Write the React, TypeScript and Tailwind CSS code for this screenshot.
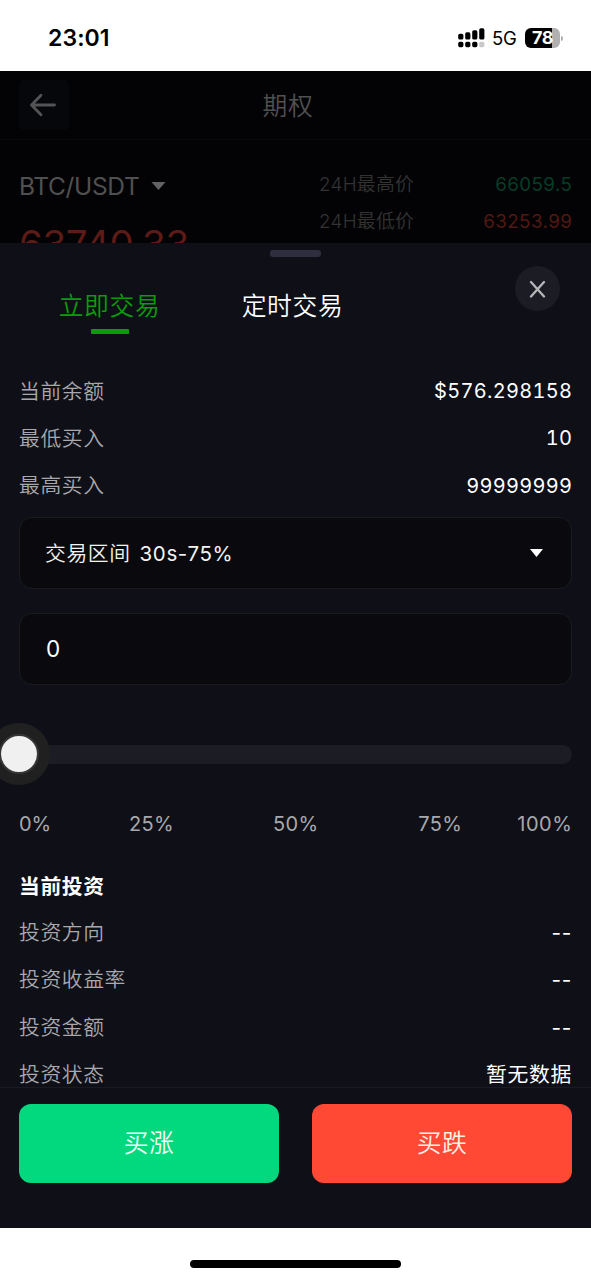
import React from "react";

function Row({ label, value }: { label: string; value: string }) {
  const numeric = /\d/.test(value);
  return (
    <div className="flex h-[47.3px] items-center justify-between">
      <span className="text-[20.8px] font-[350] tracking-[0.6px] text-[#a8a8ad]">{label}</span>
      <span
        className={
          numeric
            ? "-mr-[0.3px] text-[20px] tracking-[0.3px] text-white tabular-nums"
            : "text-[20.8px] tracking-[0.7px] text-white"
        }
      >
        {value}
      </span>
    </div>
  );
}

function StatusBar() {
  return (
    <div className="flex h-[71px] shrink-0 items-center justify-between bg-white pr-[28px] pb-1 pl-12 text-black">
      <span className="mt-[9px] text-[23px] leading-none font-semibold tracking-[0.1px]">23:01</span>
      <div className="mt-[9px] flex items-center">
        <svg width="28" height="20" viewBox="0 0 28 20">
          <g fill="#000">
            <rect x="0.2" y="5.8" width="5.2" height="5.8" rx="1.6" />
            <rect x="7.2" y="4.3" width="5.2" height="7.3" rx="1.6" />
            <rect x="14.2" y="2.3" width="5.2" height="9.3" rx="1.6" />
            <rect x="21.2" y="0.3" width="5.2" height="11.3" rx="1.6" />
            <rect x="0.2" y="13.8" width="5.2" height="5.4" rx="1.6" />
            <rect x="7.2" y="13.8" width="5.2" height="5.4" rx="1.6" />
            <rect x="14.2" y="13.8" width="5.2" height="5.4" rx="1.6" />
          </g>
          <rect x="21.2" y="13.8" width="5.2" height="5.4" rx="1.6" fill="#c9c9c9" />
        </svg>
        <span className="ml-[6px] w-[27px] text-[18.5px] leading-none tracking-[-0.2px]">5G</span>
        <div className="ml-[6px] flex h-[20px] w-[35px] items-center justify-center rounded-[6px] bg-[linear-gradient(to_right,#000_78%,#b0b0b0_78%)] text-[18px] leading-none font-bold tracking-[-0.5px] text-white">
          78
        </div>
        <div className="ml-[1px] h-[5px] w-[2px] rounded-r-full bg-[#b0b0b0]" />
      </div>
    </div>
  );
}

function Backdrop() {
  return (
    <div className="h-[172px] shrink-0 overflow-hidden bg-[#030305]">
      <div className="grid h-[69px] grid-cols-[50px_1fr_50px] items-center border-b border-[#09090c] px-[19px]">
        <div className="flex size-[50px] items-center justify-center rounded-[5px] bg-[#06070a]">
          <svg className="mr-[2px]" width="28" height="24" viewBox="0 0 28 24" fill="none" stroke="#545456" strokeWidth="2.8" strokeLinecap="round" strokeLinejoin="round">
            <path d="M25.5 12H2.5M12 2.3 2.5 12l9.5 9.7" />
          </svg>
        </div>
        <h1 className="pt-[3px] pr-[15px] text-center text-[24.8px] font-[350] tracking-[0.8px] text-[#505050]">期权</h1>
      </div>
      <div className="flex justify-between px-[19px]">
        <div className="pt-[31px]">
          <div className="flex items-center gap-[12px] text-[24.5px] leading-[30px] tracking-[-0.35px] text-[#505050]">
            BTC/USDT
            <svg width="15" height="8" viewBox="0 0 14 8">
              <path d="M0 0h14L7 8z" fill="#626262" />
            </svg>
          </div>
          <div className="mt-[18px] text-[38.5px] leading-[50px] tracking-[-0.4px] text-[#5c1b16]">63740.33</div>
        </div>
        <div className="w-[253px] pt-[27px] text-[18.8px] tracking-[0.3px]">
          <div className="flex h-[37px] items-center justify-between">
            <span className="font-[350] text-[#333333]">24H最高价</span>
            <span className="-mr-[0.3px] tracking-[0.4px] text-[#063d28]">66059.5</span>
          </div>
          <div className="flex h-[37px] items-center justify-between">
            <span className="font-[350] text-[#333333]">24H最低价</span>
            <span className="-mr-[0.3px] tracking-[0.4px] text-[#521813]">63253.99</span>
          </div>
        </div>
      </div>
    </div>
  );
}

function Tabs() {
  return (
    <div className="flex pl-[18px] text-[24.8px] leading-[36px] font-[350] tracking-[0.6px]">
      <button className="flex w-[183px] flex-col items-center text-[#0b9b0b]">
        立即交易
        <span className="mt-[5px] h-[5px] w-[38px] rounded-[1px] bg-[#0b9b0b]" />
      </button>
      <button className="flex w-[183px] flex-col items-center text-white">定时交易</button>
    </div>
  );
}

function AmountSlider() {
  return (
    <div className="relative mt-[60px] h-[19px] rounded-full bg-[#1c1c24]">
      <div className="absolute top-1/2 left-0 flex size-[62px] -translate-1/2 items-center justify-center rounded-full bg-[#202020]">
        <div className="size-[40px] rounded-full border-2 border-[#363636] bg-[#f0f0f0]" />
      </div>
    </div>
  );
}

export default function App() {
  return (
    <div className="flex h-[1280px] w-full flex-col overflow-hidden bg-white font-['Inter','Noto_Sans_CJK_SC',sans-serif]">
      <StatusBar />
      <Backdrop />
      <main className="flex h-[985px] shrink-0 flex-col bg-[#0f0f18]">
        <section className="relative h-[844px] overflow-hidden px-[19px]">
          <div className="mx-auto mt-[7px] h-[7px] w-[51px] rounded-[3px] bg-[#2f2e3e]" />
          <button className="absolute top-[23px] right-[31px] flex size-[45px] items-center justify-center rounded-full bg-[#1c1c24]">
            <svg className="-ml-px" width="17" height="18" viewBox="0 0 17 18" stroke="#b6b6b9" strokeWidth="2.3" strokeLinecap="round">
              <path d="m2 2 13 14.5M15 2 2 16.5" />
            </svg>
          </button>
          <div className="-mx-[19px] mt-[31px]">
            <Tabs />
          </div>
          <div className="mt-[33.5px]">
            <Row label="当前余额" value="$576.298158" />
            <Row label="最低买入" value="10" />
            <Row label="最高买入" value="99999999" />
          </div>
          <div className="mt-[7.5px] flex h-[72px] items-center justify-between rounded-[13px] border-[1.5px] border-[#1a1a20] bg-[#0a0a0e] pr-[28px] pl-[25px] text-[20.8px] tracking-[0.6px] text-[#f3f3ef]">
            <span className="flex items-baseline gap-[9px] pt-[2px]">
              <span className="font-[350]">交易区间</span>
              <span className="text-[20.5px]">30s-75%</span>
            </span>
            <svg width="13" height="8" viewBox="0 0 13 8">
              <path d="M0 0h13L6.5 8z" fill="#fff" />
            </svg>
          </div>
          <div className="mt-[24px] flex h-[72px] items-center rounded-[13px] border-[1.5px] border-[#1a1a20] bg-[#0a0a0e] px-[26px] text-[22.5px] text-white">0</div>
          <AmountSlider />
          <div className="mt-[45px] flex h-[30px] items-center justify-between text-[20px] text-[#a8a8ac]">
            <span className="w-[60px]">0%</span>
            <span className="w-[144px] text-center tracking-[0.3px]">25%</span>
            <span className="w-[144px] text-center tracking-[0.3px]">50%</span>
            <span className="w-[144px] text-center tracking-[0.3px]">75%</span>
            <span className="-mr-[0.6px] flex w-[60px] justify-end tracking-[0.6px]">100%</span>
          </div>
          <h2 className="mt-[33px] h-[30px] text-[20.8px] leading-[30px] font-bold tracking-[0.6px] text-white">当前投资</h2>
          <div className="mt-[7px]">
            <Row label="投资方向" value="--" />
            <Row label="投资收益率" value="--" />
            <Row label="投资金额" value="--" />
            <Row label="投资状态" value="暂无数据" />
          </div>
        </section>
        <div className="grid flex-1 grid-cols-2 items-start gap-[33px] border-t border-[#1a1a22] px-[19px] pt-[16px]">
          <button className="h-[79px] rounded-[12px] bg-[#02d97f] text-[24.8px] font-[350] tracking-[0.5px] text-[#f2fff6]">买涨</button>
          <button className="h-[79px] rounded-[12px] bg-[#ff4935] text-[24.8px] font-[350] tracking-[0.5px] text-[#fff1e5]">买跌</button>
        </div>
      </main>
      <footer className="flex h-[52px] shrink-0 justify-center bg-white pt-[32px]">
        <div className="h-[8px] w-[211px] rounded-full bg-black" />
      </footer>
    </div>
  );
}
